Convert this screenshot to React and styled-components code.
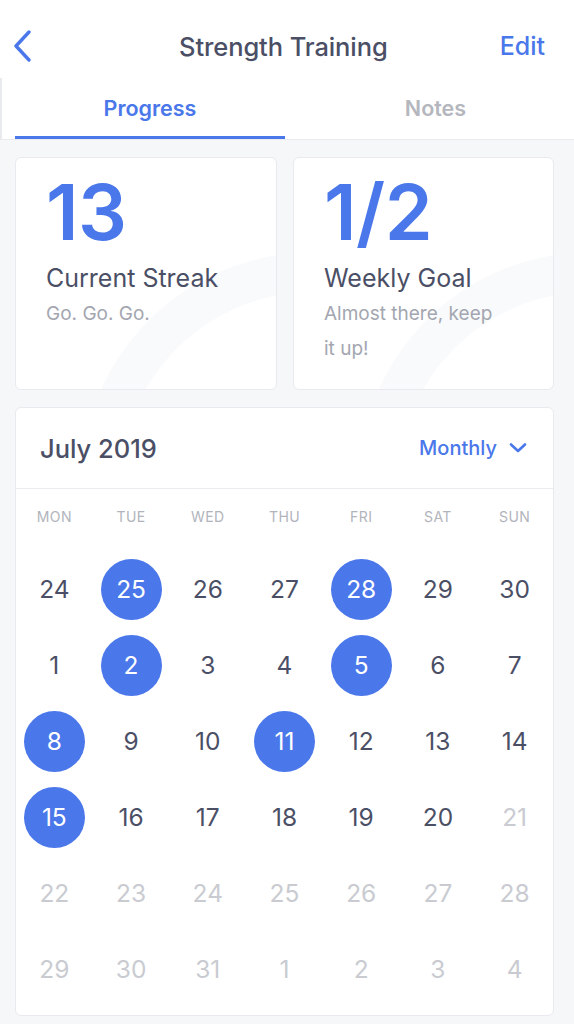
import React from "react";
import styled, { createGlobalStyle } from "styled-components";

const BLUE = "#4a77ea";
const DARK = "#4b4f66";
const GRAY = "#a3a6b0";

const Global = createGlobalStyle`
  html, body { margin: 0; padding: 0; background: #f6f7f9; }
  body { font-family: Inter, "Noto Sans", sans-serif; -webkit-font-smoothing: antialiased; }
  * { box-sizing: border-box; }
`;

const Screen = styled.div`
  width: 574px;
  min-height: 1024px;
  background: #f6f7f9;
  display: flex;
  flex-direction: column;
`;

const Header = styled.header`
  height: 78px;
  padding: 14px 29px 0 13px;
  background: #fff;
  display: flex;
  align-items: center;
  justify-content: space-between;
`;

const BackButton = styled.button`
  width: 40px;
  height: 64px;
  border: 0;
  padding: 0;
  background: none;
  display: flex;
  align-items: center;
`;

const Title = styled.h1`
  margin: 0 0 0 14px;
  font-size: 25.5px;
  font-weight: 500;
  color: ${DARK};
  letter-spacing: -0.1px;
`;

const EditButton = styled.button`
  border: 0;
  padding: 0;
  background: none;
  font-family: inherit;
  font-size: 25px;
  font-weight: 500;
  color: ${BLUE};
`;

const Tabs = styled.nav`
  height: 62px;
  background: #fff;
  display: flex;
  padding-left: 15px;
  border-left: 2px solid #e9eaee;
  border-bottom: 1px solid #eaebef;
`;

const Tab = styled.div`
  ${(p) => (p.$active ? "width: 270px;" : "flex: 1; padding-left: 12px;")}
  display: flex;
  align-items: center;
  justify-content: center;
  font-size: 21.5px;
  font-weight: 600;
  color: ${(p) => (p.$active ? BLUE : "#b5b7be")};
  border-bottom: 3px solid ${(p) => (p.$active ? BLUE : "transparent")};
  padding-top: 2px;
  margin-left: ${(p) => (p.$active ? "-2px" : "0")};
`;

const Content = styled.main`
  padding: 17px 20px 0 15px;
  display: flex;
  flex-direction: column;
  gap: 17px;
`;

const StatGrid = styled.div`
  display: grid;
  grid-template-columns: 262px 261px;
  gap: 16px;
`;

const StatCard = styled.section`
  position: relative;
  overflow: hidden;
  height: 233px;
  background: #fff;
  border: 1px solid #e8eaf0;
  border-radius: 6px;
  padding: 16px 20px 0 30px;
`;

const Deco = styled.svg`
  position: absolute;
  inset: 0;
  width: 100%;
  height: 100%;
  pointer-events: none;
`;

const StatBody = styled.div`
  position: relative;
`;

const BigNumber = styled.div`
  font-size: 77px;
  line-height: 76px;
  font-weight: 600;
  color: ${BLUE};
  letter-spacing: -0.5px;
`;

const StatLabel = styled.div`
  margin-top: 13px;
  font-size: 25px;
  line-height: 30px;
  font-weight: 400;
  color: ${DARK};
`;

const StatNote = styled.div`
  margin-top: 3px;
  font-size: 19px;
  line-height: 35px;
  color: ${GRAY};
  width: 180px;
`;

const CalendarCard = styled.section`
  background: #fff;
  border: 1px solid #e8eaf0;
  border-radius: 6px;
  padding-bottom: 8px;
`;

const CalHeader = styled.div`
  height: 81px;
  padding: 0 26px 0 24px;
  display: flex;
  align-items: center;
  justify-content: space-between;
  border-bottom: 1px solid #ebecf0;
`;

const Month = styled.div`
  font-size: 25.5px;
  font-weight: 500;
  color: ${DARK};
`;

const Dropdown = styled.div`
  display: flex;
  align-items: center;
  gap: 12px;
  font-size: 20px;
  font-weight: 500;
  color: ${BLUE};
`;

const Week = styled.div`
  display: grid;
  grid-template-columns: repeat(7, 1fr);
`;

const WeekdayRow = styled(Week)`
  padding: 19px 0 25px;
`;

const Weekday = styled.div`
  text-align: center;
  font-size: 14px;
  line-height: 18px;
  color: #b1b4bc;
  letter-spacing: 0.4px;
`;

const DayCell = styled.div`
  height: 76px;
  display: flex;
  align-items: center;
  justify-content: center;
`;

const Day = styled.div`
  width: 61px;
  height: 61px;
  border-radius: 50%;
  display: flex;
  align-items: center;
  justify-content: center;
  font-size: 24.5px;
  font-weight: 400;
  background: ${(p) => (p.$done ? BLUE : "transparent")};
  color: ${(p) => (p.$done ? "#fff" : p.$faded ? "#c9cbd1" : DARK)};
`;

const weeks = [
  [[24], [25, 1], [26], [27], [28, 1], [29], [30]],
  [[1], [2, 1], [3], [4], [5, 1], [6], [7]],
  [[8, 1], [9], [10], [11, 1], [12], [13], [14]],
  [[15, 1], [16], [17], [18], [19], [20], [21, 0, 1]],
  [[22, 0, 1], [23, 0, 1], [24, 0, 1], [25, 0, 1], [26, 0, 1], [27, 0, 1], [28, 0, 1]],
  [[29, 0, 1], [30, 0, 1], [31, 0, 1], [1, 0, 1], [2, 0, 1], [3, 0, 1], [4, 0, 1]],
];

const days = ["MON", "TUE", "WED", "THU", "FRI", "SAT", "SUN"];

function Decoration() {
  return (
    <Deco viewBox="0 0 262 233" preserveAspectRatio="none">
      <circle cx="300" cy="330" r="215" fill="none" stroke="#f9fafb" strokeWidth="40" />
    </Deco>
  );
}

export default function App() {
  return (
    <Screen>
      <Global />
      <Header>
        <BackButton aria-label="Back">
          <svg width="20" height="32" viewBox="0 0 20 32">
            <path d="M16 2 L3 16 L16 30" fill="none" stroke={BLUE} strokeWidth="3.4" strokeLinecap="round" strokeLinejoin="round" />
          </svg>
        </BackButton>
        <Title>Strength Training</Title>
        <EditButton>Edit</EditButton>
      </Header>
      <Tabs>
        <Tab $active>Progress</Tab>
        <Tab>Notes</Tab>
      </Tabs>
      <Content>
        <StatGrid>
          <StatCard>
            <Decoration />
            <StatBody>
              <BigNumber>13</BigNumber>
              <StatLabel>Current Streak</StatLabel>
              <StatNote>Go. Go. Go.</StatNote>
            </StatBody>
          </StatCard>
          <StatCard>
            <Decoration />
            <StatBody>
              <BigNumber>1/2</BigNumber>
              <StatLabel>Weekly Goal</StatLabel>
              <StatNote>Almost there, keep it up!</StatNote>
            </StatBody>
          </StatCard>
        </StatGrid>
        <CalendarCard>
          <CalHeader>
            <Month>July 2019</Month>
            <Dropdown>
              Monthly
              <svg width="18" height="12" viewBox="0 0 18 12">
                <path d="M2 2.5 L9 9 L16 2.5" fill="none" stroke={BLUE} strokeWidth="2.6" strokeLinecap="round" strokeLinejoin="round" />
              </svg>
            </Dropdown>
          </CalHeader>
          <WeekdayRow>
            {days.map((d) => (
              <Weekday key={d}>{d}</Weekday>
            ))}
          </WeekdayRow>
          {weeks.map((w, i) => (
            <Week key={i}>
              {w.map(([n, done, faded], j) => (
                <DayCell key={j}>
                  <Day $done={!!done} $faded={!!faded}>{n}</Day>
                </DayCell>
              ))}
            </Week>
          ))}
        </CalendarCard>
      </Content>
    </Screen>
  );
}
